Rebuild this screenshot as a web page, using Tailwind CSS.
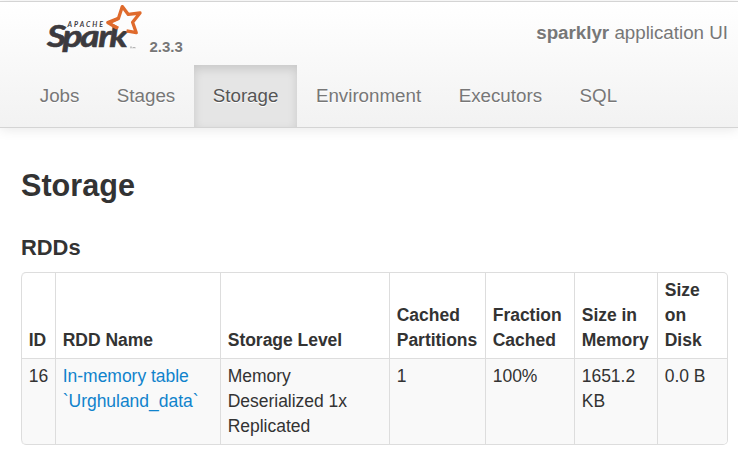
<!DOCTYPE html>
<html lang="en">
<head>
<meta charset="utf-8">
<title>sparklyr - Storage</title>
<script src="https://cdn.jsdelivr.net/npm/@tailwindcss/browser@4"></script>
</head>
<body class="bg-white text-[#333] text-[17.5px] leading-[25px] font-['Liberation_Sans',Arial,sans-serif] h-[457px] overflow-hidden pt-px">
<header class="h-[127px] flex flex-col border-y border-[#d4d4d4] bg-linear-to-b from-white to-[#f2f2f2] shadow-[0_1px_12px_rgba(0,0,0,0.1)] text-[18.75px] text-[#777] [text-shadow:0_1px_0_#fff]">
  <div class="h-[63px] flex justify-between pl-[46px] pr-[10px]">
    <div class="flex">
      <svg class="w-[100px] h-[54px] overflow-visible" viewBox="46 2 100 54" role="img" aria-label="Apache Spark">
        <text transform="translate(47 47.2) scale(1.2 1)" x="0 13 27.8 42.8 51.8" font-family="Lato" font-weight="700" font-style="italic" font-size="31" fill="#3c3a3e" stroke="#3c3a3e" stroke-width=".6" style="text-shadow:none">Spark</text>
        <path d="M117 28.5 L107.8 22.6 L118.5 18.2 L122.3 6.6 L128.3 14.4 L140 13 L132.6 22.3 L136.3 32.7 L126.5 30.8 Z" fill="#fcfcfc" stroke="#fcfcfc" stroke-width="1"/>
        <text transform="translate(67.5 26.8)" font-family="Lato" font-weight="700" font-style="italic" font-size="7" textLength="35.5" fill="#3c3a3e" style="text-shadow:none">APACHE</text>
        <path d="M117 28 L107.8 22.6 L118.5 18.2 L122.3 6.6 L128.3 14.4 L140 13 L132.6 22.3 L136.3 32.7 L126.5 30.8" fill="none" stroke="#df6a2c" stroke-width="3.3" stroke-linejoin="round"/>
        <path d="M106.5 22.5 L118 17 L119.8 19.8 L112 23.2 L119 26.8 L117.5 29.8 Z" fill="#df6a2c"/>
        <path d="M130 47h2m-1 0v1.5m2 0v-1.5l1 1 1-1v1.5" fill="none" stroke="#999" stroke-width=".6"/>
      </svg>
      <span class="ml-[3.5px] mt-[32px] text-[15px] font-bold">2.3.3</span>
    </div>
    <p class="mt-[18px]"><strong>sparklyr</strong> application UI</p>
  </div>
  <nav class="flex flex-1 pl-[21px] leading-[61px]">
    <a class="px-[18.75px]">Jobs</a>
    <a class="px-[18.75px]">Stages</a>
    <a class="px-[18.75px] bg-[#e5e5e5] text-[#555] shadow-[inset_0_4px_10px_rgba(0,0,0,0.125)]">Storage</a>
    <a class="px-[18.75px]">Environment</a>
    <a class="px-[18.75px]">Executors</a>
    <a class="px-[18.75px]">SQL</a>
  </nav>
</header>
<main class="pl-[21px] pt-[32px]">
  <h3 class="text-[30.6px] leading-[50px] font-bold">Storage</h3>
  <h4 class="mt-[25px] text-[21.9px] leading-[25px] font-bold">RDDs</h4>
  <table class="mt-[12px] w-[707px] table-fixed border-separate border-spacing-0 border border-l-0 border-[#ddd] rounded-[5px] text-left tracking-[-0.03px]">
    <colgroup><col class="w-[34px]"><col class="w-[165px]"><col class="w-[169px]"><col class="w-[96px]"><col class="w-[89px]"><col class="w-[83px]"><col class="w-[70px]"></colgroup>
    <thead>
      <tr class="align-bottom *:border-l *:border-[#ddd] *:pl-[6.75px] *:py-[5px]">
        <th class="rounded-tl-[5px]">ID</th><th>RDD Name</th><th>Storage Level</th><th>Cached<br>Partitions</th><th>Fraction<br>Cached</th><th>Size in<br>Memory</th><th>Size<br>on<br>Disk</th>
      </tr>
    </thead>
    <tbody>
      <tr class="align-top *:border-l *:border-t *:border-[#ddd] *:bg-[#f9f9f9] *:pl-[6.75px] *:py-[5px]">
        <td class="rounded-bl-[5px]">16</td><td><a class="text-[#1083cc]">In-memory table<br>`Urghuland_data`</a></td><td>Memory<br>Deserialized 1x<br>Replicated</td><td>1</td><td>100%</td><td>1651.2<br>KB</td><td class="rounded-br-[5px]">0.0 B</td>
      </tr>
    </tbody>
  </table>
</main>
</body>
</html>
